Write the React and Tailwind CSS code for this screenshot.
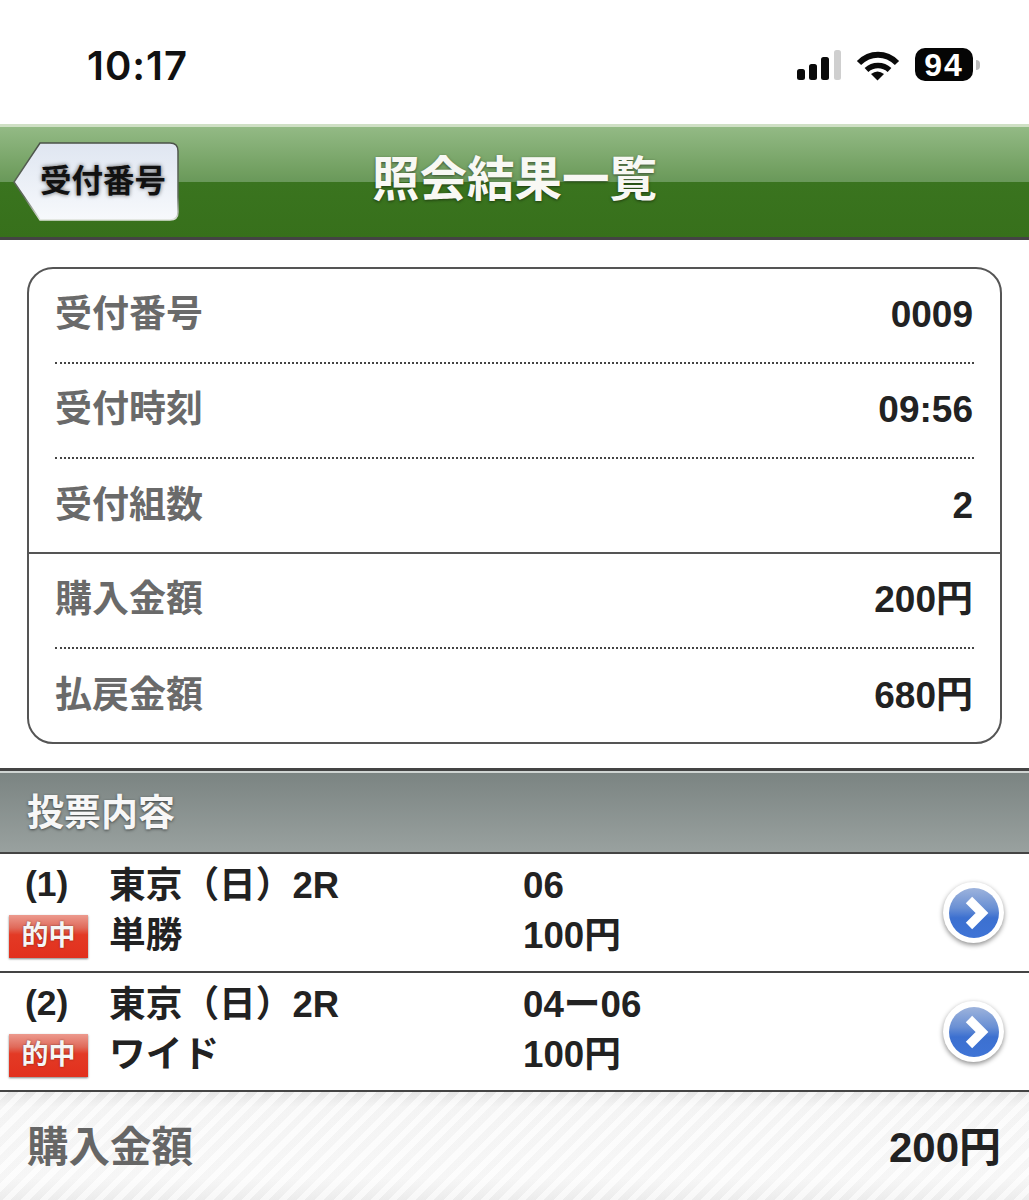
const FONT = "font-['Liberation_Sans','Noto_Sans_CJK_JP',sans-serif]";

function StatusBar() {
  return (
    <div className="h-[124px] bg-white flex items-start">
      <div className="ml-[87px] mt-[40px] text-[40px] leading-[52px] font-semibold font-['Inter',sans-serif] tracking-[1px] text-[#111]">10:17</div>
      <div className="ml-auto mr-[49px] mt-[48px] flex items-start">
        <svg width="44" height="32" viewBox="0 0 44 32" className="mt-[1px]">
          <rect x="0" y="20" width="8" height="11" rx="2.5" fill="#0a0a0a" />
          <rect x="12" y="15" width="8" height="16" rx="2.5" fill="#0a0a0a" />
          <rect x="24" y="8" width="8" height="23" rx="2.5" fill="#0a0a0a" />
          <rect x="37" y="1" width="7" height="30" rx="2.5" fill="#cfcfcf" />
        </svg>
        <svg width="44" height="32" viewBox="0 0 44 32" className="ml-[15px] mt-[1px]">
          <path d="M3 14 C14 3 30 3 41 14" fill="none" stroke="#0a0a0a" strokeWidth="6" />
          <path d="M10.5 21 C17 15 27 15 33.5 21" fill="none" stroke="#0a0a0a" strokeWidth="5.5" />
          <path d="M15 25 Q21.5 20 28 25 L21.5 31.5 Z" fill="#0a0a0a" />
        </svg>
        <div className="ml-[15px] w-[58px] h-[33px] rounded-[10px] bg-[#050505] flex items-center justify-center text-white font-bold text-[32px] leading-none font-['Liberation_Sans',sans-serif] tracking-[2px]">94</div>
        <div className="ml-[3px] mt-[12px] w-[4px] h-[10px] rounded-r-full bg-[#bdbdbd]"></div>
      </div>
    </div>
  );
}

function Header() {
  return (
    <div className="h-[116px] flex items-start pl-[13px] border-t-[3px] border-b-[3px] border-t-[#cfe0c5] border-b-[#444] bg-[linear-gradient(to_bottom,#93ba85_0%,#709e5f_42%,#69985a_50%,#3a741f_50%,#37701b_100%)]">
      <div className="relative mt-[15px] w-[166px] h-[79px] flex items-center">
        <svg width="166" height="79" viewBox="0 0 166 79" className="absolute left-0 top-0">
          <defs>
            <linearGradient id="btn" x1="0" y1="0" x2="0" y2="1">
              <stop offset="0" stopColor="#dfe6f1" />
              <stop offset="1" stopColor="#f7f9fc" />
            </linearGradient>
            <linearGradient id="btnEdge" x1="0" y1="0" x2="0" y2="1">
              <stop offset="0" stopColor="#4a5248" />
              <stop offset="0.7" stopColor="#5f6a5c" />
              <stop offset="1" stopColor="#dfe4dc" />
            </linearGradient>
          </defs>
          <path d="M27 1 H157 Q165 1 165 9 V70 Q165 78 157 78 H27 L1 40 Z" fill="url(#btn)" stroke="url(#btnEdge)" strokeWidth="1.5" />
        </svg>
        <span className={`relative ml-[27px] text-[31.5px] leading-none font-bold text-[#111] whitespace-nowrap [text-shadow:0_0_4px_rgba(0,0,0,0.6)] ${FONT}`}>受付番号</span>
      </div>
      <div className={`ml-[193px] mt-[23px] text-[47.5px] leading-[60px] font-bold text-[#f8f8f4] whitespace-nowrap [text-shadow:0_1px_3px_rgba(0,0,0,0.5)] ${FONT}`}>照会結果一覧</div>
    </div>
  );
}

function InfoRow({ label, value, line }) {
  const border = line === "dotted"
    ? "border-b-2 border-dotted border-[#444]"
    : "";
  return (
    <div className={`mx-[26px] pr-[1px] h-[95px] flex items-center justify-between ${border}`}>
      <span className={`text-[37px] leading-none font-bold text-[#6a6a6a] -mt-[2px] ${FONT}`}>{label}</span>
      <span className={`text-[37px] leading-none font-bold text-[#222] -mt-[2px] ${FONT}`}>{value}</span>
    </div>
  );
}

function InfoCard() {
  return (
    <div className="mx-[27px] mt-[27px] h-[477px] rounded-[26px] border-2 border-[#555] bg-white overflow-hidden">
      <InfoRow label="受付番号" value="0009" line="dotted" />
      <InfoRow label="受付時刻" value="09:56" line="dotted" />
      <InfoRow label="受付組数" value="2" />
      <div className="border-t-2 border-[#555] -mt-[2px]"></div>
      <InfoRow label="購入金額" value="200円" line="dotted" />
      <InfoRow label="払戻金額" value="680円" />
    </div>
  );
}

function SectionHeader() {
  return (
    <div className="mt-[24px] h-[86px] flex items-center pl-[27px] border-t-[3px] border-b-[2px] border-t-[#444] border-b-[#444] bg-[linear-gradient(to_bottom,#cfd4d2_0px,#cfd4d2_2px,#7b8482_2px,#99a19f_100%)]">
      <span className={`mt-[3px] text-[37px] leading-none font-bold text-[#f7f7f7] [text-shadow:0_1px_3px_rgba(0,0,0,0.55)] ${FONT}`}>投票内容</span>
    </div>
  );
}

function ArrowButton() {
  return (
    <div className="w-[61px] h-[61px] rounded-full bg-white flex items-center justify-center shadow-[0_2px_5px_rgba(0,0,0,0.45)]">
      <div className="w-[50px] h-[50px] rounded-full bg-[linear-gradient(to_bottom,#9db3dc_0%,#6a90d4_40%,#3c70d0_60%,#3f74d6_100%)] flex items-center justify-center">
        <svg width="50" height="50" viewBox="0 0 50 50">
          <polyline points="20,12 33,25 20,38" fill="none" stroke="#fff" strokeWidth="9" />
        </svg>
      </div>
    </div>
  );
}

function BetRow({ n, kind, numbers }) {
  return (
    <div className={`h-[119px] flex items-center border-b-2 border-[#444] pl-[9px] pr-[25px] ${FONT}`}>
      <div className="grid grid-cols-[100px_414px] grid-rows-[50px_50px] items-center text-[36.7px] leading-none font-bold text-[#222] -mt-[2px]">
        <span className="pl-[16px] text-[35.5px] mb-[4px]">({n})</span>
        <span className="whitespace-nowrap">東京（日）<span className="text-[36.5px]">2R</span></span>
        <span className="w-[79px] h-[43px] flex items-center justify-center text-[27px] font-bold text-[#f6f6f6] bg-[linear-gradient(to_bottom,#ec9a8e_0%,#e06a5a_30%,#e33a25_46%,#e2301d_100%)] shadow-[0_1px_2px_rgba(0,0,0,0.5)] [text-shadow:0_0_2px_rgba(0,0,0,0.5)]">的中</span>
        <span>{kind}</span>
        <span className="col-start-3 row-start-1 whitespace-nowrap">{numbers}</span>
        <span className="col-start-3 row-start-2">100円</span>
      </div>
      <div className="ml-auto"><ArrowButton /></div>
    </div>
  );
}

function Footer() {
  return (
    <div className="h-[108px] pt-[4px] flex items-center justify-between pl-[27px] pr-[28px] bg-[repeating-linear-gradient(135deg,rgba(255,255,255,0.6)_0px,rgba(255,255,255,0.6)_6px,rgba(235,235,235,0.2)_6px,rgba(235,235,235,0.2)_13px),linear-gradient(to_bottom,#e4e4e4_0%,#f6f6f6_14%,#f9f9f9_80%,#ededed_100%)]">
      <span className={`text-[41.5px] leading-none font-bold text-[#666] ${FONT}`}>購入金額</span>
      <span className={`text-[42px] leading-none font-bold text-[#222] ${FONT}`}>200円</span>
    </div>
  );
}

export default function App() {
  return (
    <div className="w-[1029px] h-[1200px] overflow-hidden bg-white">
      <StatusBar />
      <Header />
      <InfoCard />
      <SectionHeader />
      <BetRow n="1" kind="単勝" numbers="06" />
      <BetRow n="2" kind="ワイド" numbers="04ー06" />
      <Footer />
    </div>
  );
}
